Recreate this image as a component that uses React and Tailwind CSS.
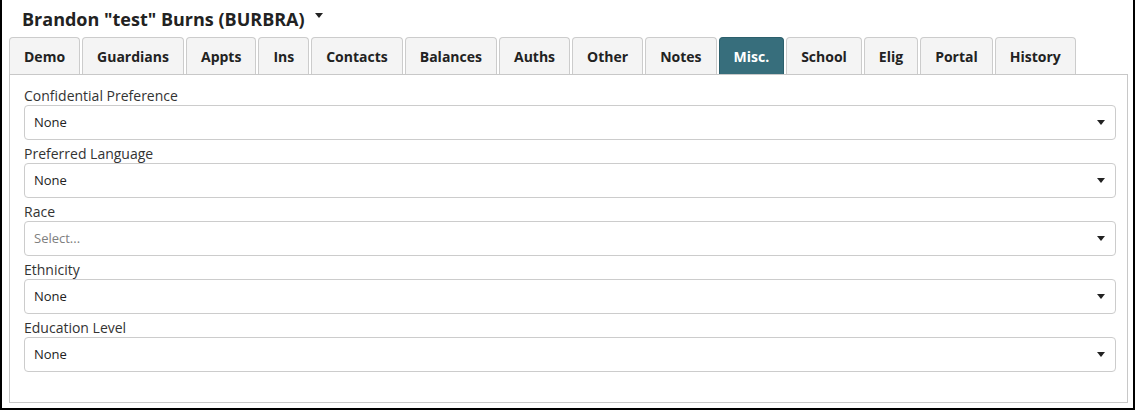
import React from "react";

const tabs = ["Demo", "Guardians", "Appts", "Ins", "Contacts", "Balances", "Auths", "Other", "Notes", "Misc.", "School", "Elig", "Portal", "History"];

const fields = [
  { label: "Confidential Preference", value: "None" },
  { label: "Preferred Language", value: "None" },
  { label: "Race", value: "Select...", placeholder: true },
  { label: "Ethnicity", value: "None" },
  { label: "Education Level", value: "None" },
];

function Caret({ className = "" }) {
  return (
    <svg width="8" height="5" viewBox="0 0 8 5" className={className}>
      <path d="M0 0h8L4 5z" fill="#222" />
    </svg>
  );
}

export default function App() {
  return (
    <div
      className="w-[1135px] h-[410px] bg-white border-x-2 border-b-2 border-black flex flex-col text-[#222]"
      style={{ fontFamily: '"Open Sans", sans-serif' }}
    >
      <div className="h-[37px] flex items-center pl-[20px] gap-[10px]">
        <h1 className="text-[18px] font-bold leading-none text-[#222]">Brandon "test" Burns (BURBRA)</h1>
        <Caret className="mb-[6px]" />
      </div>

      <div className="flex pl-[7px] gap-[2px]">
        {tabs.map((t) => {
          const active = t === "Misc.";
          return (
            <div
              key={t}
              className={
                "h-[37px] px-[14px] flex items-center text-[14px] font-bold rounded-t-[4px] border border-b-0 " +
                (active ? "bg-[#376e7c] border-[#2c5f6c] text-white" : "bg-[#f4f4f4] border-[#cccccc] text-[#222]")
              }
            >
              {t}
            </div>
          );
        })}
      </div>

      <div className="ml-[7px] mr-[5px] mb-[5px] flex-1 border border-[#c8c8c8] pl-[14px] pr-[11px] pt-[12px]">
        {fields.map((f) => (
          <div key={f.label} className="mb-[5px]">
            <div className="text-[14px] leading-[18px] text-[#333]">{f.label}</div>
            <div className="h-[35px] rounded-[4px] border border-[#cccccc] flex items-center justify-between pl-[9px] pr-[10px]">
              <span className={"text-[13px] " + (f.placeholder ? "text-[#808080]" : "text-[#222]")}>{f.value}</span>
              <Caret />
            </div>
          </div>
        ))}
      </div>
    </div>
  );
}
